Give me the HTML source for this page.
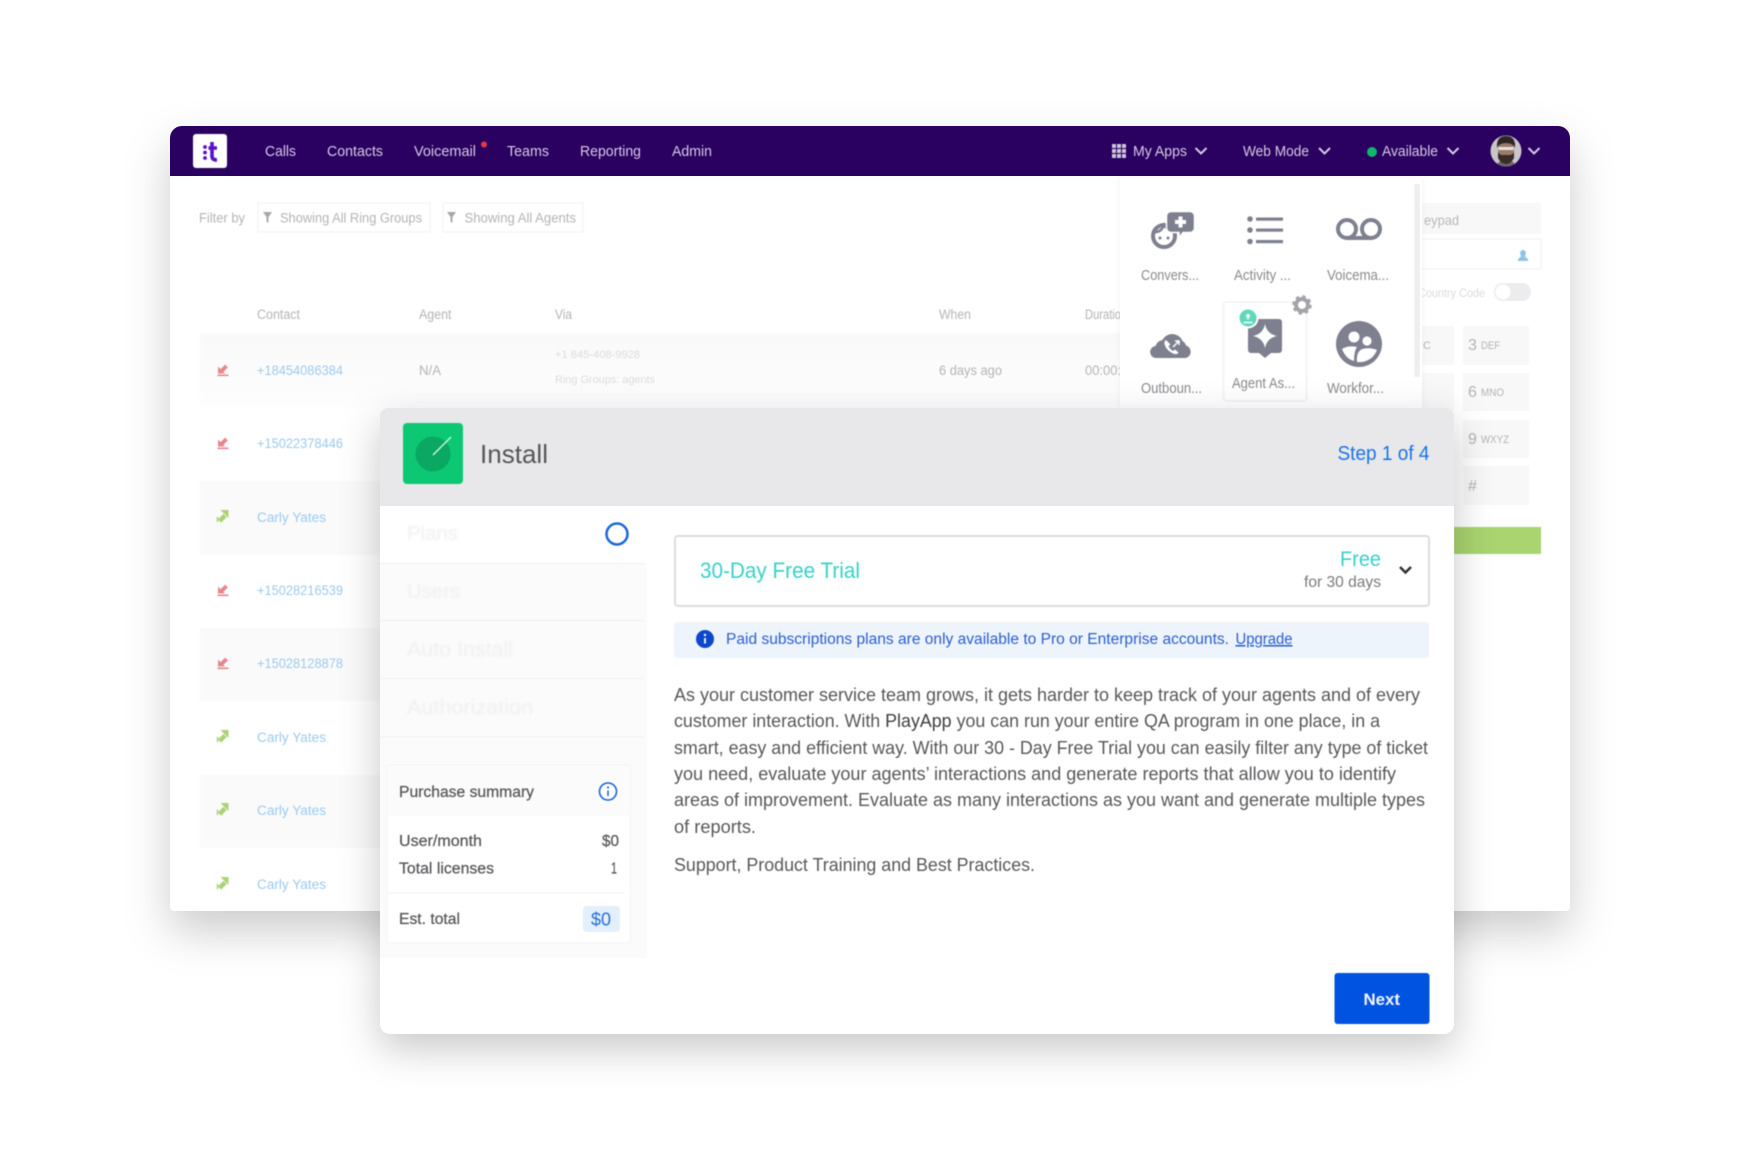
<!DOCTYPE html>
<html lang="en"><head><meta charset="utf-8"><title>Install</title>
<style>
html,body{margin:0;padding:0;background:#fff;width:1740px;height:1160px;overflow:hidden}
svg{display:block;position:absolute;left:0;top:0}
text{font-family:"Liberation Sans",sans-serif;white-space:pre}
.nav text{font-size:15px;fill:#d6cbe6}
.soft{filter:blur(.6px)}
.softer{filter:blur(1.1px)}
.bg text{fill:#b4b4b8;font-size:13.500px}
.lnk text{fill:#9ccaf0;font-size:13.500px}
.lab text{font-size:14.500px;fill:#8a8a90}
.p text{font-size:18px;fill:#58585c}
.s text{font-size:15.500px;fill:#58585c;stroke:#58585c;stroke-width:.25px}
.side text{font-size:20px;fill:#efeff0}
.k text{fill:#b3b3b5;font-size:16px}
.k .sm{font-size:11px}
</style></head><body>
<svg width="1740" height="1160" viewBox="0 0 1740 1160" xmlns="http://www.w3.org/2000/svg">
<defs>
<linearGradient id="rowg" x1="0" y1="0" x2="0" y2="1"><stop offset="0" stop-color="#f9f9f9"/><stop offset="1" stop-color="#fefefe"/></linearGradient>
<g id="rd"><path d="M3.500-4L-1.500 1" stroke-width="4" stroke="currentColor" fill="none"/><path d="M-5-3.500V3.500H2Z" fill="currentColor"/><rect x="-5.500" y="4.500" width="11" height="1.600" fill="currentColor"/></g>
<g id="gr"><path d="M-3.500 5L2-.5" stroke-width="4.500" stroke="currentColor" fill="none"/><path d="M5.500-6V2L-2.500-6Z" fill="currentColor"/><path d="M-5.500 1V6" stroke="currentColor" stroke-width="1.500"/></g>
</defs>
<!-- window -->
<path d="M182 126H1558a12 12 0 0 1 12 12V907a4 4 0 0 1-4 4H174a4 4 0 0 1-4-4V138a12 12 0 0 1 12-12Z" fill="#fff" style="filter:drop-shadow(0 20px 22px rgba(0,0,0,.2))"/>
<path d="M182 126H1558a12 12 0 0 1 12 12V176H170V138a12 12 0 0 1 12-12Z" fill="#2a0060"/>

<g class="soft">
<!-- logo -->
<rect x="193" y="134" width="34" height="34" rx="3" fill="#fff"/>
<circle cx="205" cy="147" r="1.900" fill="#5a12c8"/><circle cx="205" cy="152.500" r="1.900" fill="#5a12c8"/><circle cx="205" cy="158" r="1.900" fill="#5a12c8"/>
<path d="M212 142V156Q212 160 217 160M208.500 148H217" fill="none" stroke="#5a12c8" stroke-width="3.600"/>
<g class="nav">
<text x="265" y="156" textLength="31" lengthAdjust="spacingAndGlyphs">Calls</text>
<text x="327" y="156" textLength="56" lengthAdjust="spacingAndGlyphs">Contacts</text>
<text x="414" y="156" textLength="62" lengthAdjust="spacingAndGlyphs">Voicemail</text>
<text x="507" y="156" textLength="42" lengthAdjust="spacingAndGlyphs">Teams</text>
<text x="580" y="156" textLength="61" lengthAdjust="spacingAndGlyphs">Reporting</text>
<text x="672" y="156" textLength="40" lengthAdjust="spacingAndGlyphs">Admin</text>
<text x="1133" y="156" textLength="54" lengthAdjust="spacingAndGlyphs">My Apps</text>
<text x="1243" y="156" textLength="66" lengthAdjust="spacingAndGlyphs">Web Mode</text>
<text x="1382" y="156" textLength="56" lengthAdjust="spacingAndGlyphs">Available</text>
</g>
<circle cx="484" cy="144.500" r="3" fill="#e8364a"/>
<g fill="#cfc6dc"><rect x="1112" y="144" width="4" height="4"/><rect x="1117" y="144" width="4" height="4"/><rect x="1122" y="144" width="4" height="4"/><rect x="1112" y="149" width="4" height="4"/><rect x="1117" y="149" width="4" height="4"/><rect x="1122" y="149" width="4" height="4"/><rect x="1112" y="154" width="4" height="4"/><rect x="1117" y="154" width="4" height="4"/><rect x="1122" y="154" width="4" height="4"/></g>
<g fill="none" stroke="#d6cbe6" stroke-width="2"><path d="M1195.500 148l5.500 5.500 5.500-5.500"/><path d="M1319 148l5.500 5.500 5.500-5.500"/><path d="M1447.500 148l5.500 5.500 5.500-5.500"/><path d="M1528.500 148l5.500 5.500 5.500-5.500"/></g>
<circle cx="1372" cy="152" r="5" fill="#12b76a"/>
<clipPath id="av"><circle cx="1506" cy="151" r="15.500"/></clipPath>
<g clip-path="url(#av)"><rect x="1490" y="135" width="32" height="32" fill="#c8c6c8"/>
<path d="M1496 170q0-10 10-10t10 10Z" fill="#6a6468"/>
<ellipse cx="1506" cy="150" rx="8" ry="11" fill="#9c7c68"/>
<path d="M1497 148q-1-12 9-12t9 12q-2-5-9-5t-9 5Z" fill="#2d2624"/>
<path d="M1498 152q2 3 4 3h8q2 0 4-3v6q-3 6-8 6t-8-6Z" fill="#3a2c28"/>
<rect x="1498.500" y="147" width="15" height="3" fill="#e6e2e0"/></g>
</g>

<!-- background page -->
<g class="soft">
<rect x="258" y="203" width="172" height="29" fill="#fff" stroke="#f2f2f2"/>
<rect x="443" y="203" width="140" height="29" fill="#fff" stroke="#f2f2f2"/>
<g class="bg">
<text x="199" y="222.500" textLength="46" lengthAdjust="spacingAndGlyphs">Filter by</text>
<text x="280" y="222.500" textLength="142" lengthAdjust="spacingAndGlyphs">Showing All Ring Groups</text>
<text x="464.500" y="222.500" textLength="111.500" lengthAdjust="spacingAndGlyphs">Showing All Agents</text>
<text x="257" y="319" textLength="43" lengthAdjust="spacingAndGlyphs">Contact</text>
<text x="419" y="319" textLength="32.500" lengthAdjust="spacingAndGlyphs">Agent</text>
<text x="555" y="319" textLength="17" lengthAdjust="spacingAndGlyphs">Via</text>
<text x="939" y="319" textLength="32" lengthAdjust="spacingAndGlyphs">When</text>
<text x="1085" y="319" textLength="36" lengthAdjust="spacingAndGlyphs">Duratio</text>
</g>
<path d="M263 212h9l-3.500 5v6l-2-1.500v-4.500Z" fill="#a8a8ac"/><path d="M447 212h9l-3.500 5v6l-2-1.500v-4.500Z" fill="#a8a8ac"/>
<rect x="200" y="333" width="960" height="75" fill="url(#rowg)"/>
<g fill="#fafafa"><rect x="200" y="481" width="190" height="74"/><rect x="200" y="628" width="190" height="73"/><rect x="200" y="775" width="190" height="73"/></g>
<g class="lnk">
<text x="257" y="375" textLength="86" lengthAdjust="spacingAndGlyphs">+18454086384</text>
<text x="257" y="448" textLength="86" lengthAdjust="spacingAndGlyphs">+15022378446</text>
<text x="257" y="522" textLength="69" lengthAdjust="spacingAndGlyphs">Carly Yates</text>
<text x="257" y="595" textLength="86" lengthAdjust="spacingAndGlyphs">+15028216539</text>
<text x="257" y="668" textLength="86" lengthAdjust="spacingAndGlyphs">+15028128878</text>
<text x="257" y="742" textLength="69" lengthAdjust="spacingAndGlyphs">Carly Yates</text>
<text x="257" y="815" textLength="69" lengthAdjust="spacingAndGlyphs">Carly Yates</text>
<text x="257" y="889" textLength="69" lengthAdjust="spacingAndGlyphs">Carly Yates</text>
</g>
<g class="bg">
<text x="419" y="375" textLength="22" lengthAdjust="spacingAndGlyphs">N/A</text>
<text x="939" y="375" textLength="63" lengthAdjust="spacingAndGlyphs">6 days ago</text>
<text x="1085" y="375" textLength="36" lengthAdjust="spacingAndGlyphs">00:00:</text>
</g>
<text x="555" y="358" textLength="85" lengthAdjust="spacingAndGlyphs" style="font-size:11px;fill:#dcdcde">+1 845-408-9928</text>
<text x="555" y="383" textLength="100" lengthAdjust="spacingAndGlyphs" style="font-size:11px;fill:#dcdcde">Ring Groups: agents</text>
<g color="#e8868e"><use href="#rd" x="223" y="370"/><use href="#rd" x="223" y="443"/><use href="#rd" x="223" y="590"/><use href="#rd" x="223" y="663"/></g>
<g color="#aad274"><use href="#gr" x="223" y="516"/><use href="#gr" x="223" y="736"/><use href="#gr" x="223" y="809"/><use href="#gr" x="223" y="883"/></g>

<!-- keypad -->
<rect x="1422" y="203" width="119" height="31" fill="#f8f8f8"/>
<text x="1424" y="225" textLength="35" lengthAdjust="spacingAndGlyphs" style="font-size:14px;fill:#b8b8ba">eypad</text>
<rect x="1410" y="239" width="131" height="30" fill="#fff" stroke="#efefef"/>
<path d="M1523 250a3 3 0 0 1 2.500 4.500l-.5 2 3 2.500v2h-10v-2l3-2.500-.5-2a3 3 0 0 1 2.500-4.500Z" fill="#8fc3e8"/>
<text x="1418" y="297" textLength="67" lengthAdjust="spacingAndGlyphs" style="font-size:11.500px;fill:#dadadc">Country Code</text>
<rect x="1494" y="283" width="37" height="18" rx="9" fill="#ececee"/><circle cx="1503" cy="292" r="7.500" fill="#fff"/>
<g fill="#f8f8f8"><rect x="1422" y="326" width="32" height="39"/><rect x="1422" y="373" width="32" height="38"/><rect x="1463" y="326" width="66" height="39"/><rect x="1463" y="373" width="66" height="38"/><rect x="1463" y="420" width="66" height="38"/><rect x="1463" y="466" width="66" height="39"/></g>
<g class="k">
<text class="sm" x="1423" y="349">C</text>
<text x="1468" y="350">3</text><text class="sm" x="1481" y="349" textLength="19" lengthAdjust="spacingAndGlyphs">DEF</text>
<text x="1468" y="397">6</text><text class="sm" x="1481" y="396" textLength="23" lengthAdjust="spacingAndGlyphs">MNO</text>
<text x="1468" y="444">9</text><text class="sm" x="1481" y="443" textLength="28" lengthAdjust="spacingAndGlyphs">WXYZ</text>
<text x="1468" y="491">#</text>
</g>
<rect x="1454" y="527" width="87" height="27" fill="#a9d46f"/>
</g>

<!-- apps dropdown -->
<rect x="1120" y="178" width="302" height="230" fill="#fff" style="filter:drop-shadow(0 0 3px rgba(0,0,0,.05))"/>
<g class="soft">
<rect x="1414.500" y="184" width="5.500" height="193" fill="#eeeeef"/>
<!-- conversations -->
<circle cx="1164" cy="236" r="11" fill="#fff" stroke="#7e808f" stroke-width="4"/>
<path d="M1153 232q8 1 11-7 4 6 10 7" fill="none" stroke="#7e808f" stroke-width="2.500"/>
<circle cx="1160" cy="238" r="1.500" fill="#7e808f"/><circle cx="1168" cy="238" r="1.500" fill="#7e808f"/>
<path d="M1171 211.500H1190a4.500 4.500 0 0 1 4.500 4.500V228a4.500 4.500 0 0 1-4.500 4.500H1183L1179 238V232.500H1171a4.500 4.500 0 0 1-4.500-4.500V216a4.500 4.500 0 0 1 4.500-4.500Z" fill="#7e808f" stroke="#fff" stroke-width="1.500"/>
<path d="M1180.500 216.500v11M1175 222h11" stroke="#fff" stroke-width="4"/>
<!-- activity -->
<g fill="#7e808f"><circle cx="1250" cy="219" r="2.800"/><circle cx="1250" cy="230" r="2.800"/><circle cx="1250" cy="241.500" r="2.800"/><rect x="1256" y="217.500" width="27" height="3.200"/><rect x="1256" y="228.500" width="27" height="3.200"/><rect x="1256" y="240" width="27" height="3.200"/></g>
<!-- voicemail -->
<g fill="none" stroke="#7e808f" stroke-width="4"><circle cx="1347" cy="229" r="9"/><circle cx="1371" cy="229" r="9"/><path d="M1347 238H1371"/></g>
<!-- cloud -->
<path d="M1157 358a6 6 0 0 1-1.500-12 9 9 0 0 1 7-6 11 11 0 0 1 20 1 8 8 0 0 1 3.500 4.500 6.500 6.500 0 0 1 0 12.500Z" fill="#7e808f"/>
<path d="M1166 340q-2 1-1.500 4 2 7 10 10 3 .5 4-1.500l-3.500-3-2 1.500q-3-1.500-4.500-5l2-1.500Z" fill="#fff"/>
<path d="M1173 347l6-6M1175 341h4v4" fill="none" stroke="#fff" stroke-width="1.500"/>
<!-- agent assist -->
<rect x="1223.500" y="302" width="83" height="99" rx="3" fill="#fff" stroke="#f1f1f3" stroke-width="1.500"/>
<path d="M1251 319H1279a3 3 0 0 1 3 3V350a3 3 0 0 1-3 3H1271L1265 358L1259 353H1251a3 3 0 0 1-3-3V322a3 3 0 0 1 3-3Z" fill="#7e808f"/>
<path d="M1265 324Q1267 334 1277 336Q1267 338 1265 348Q1263 338 1253 336Q1263 334 1265 324Z" fill="#fff"/>
<circle cx="1248" cy="318" r="9.500" fill="#5fd9b9" stroke="#fff" stroke-width="2"/>
<circle cx="1248" cy="316" r="2.200" fill="#e8fbf5"/><path d="M1248 316v3.500M1243.500 322.500h9" stroke="#e8fbf5" stroke-width="1.800"/>
<circle cx="1302" cy="305" r="6" fill="#fff" stroke="#a4a4a8" stroke-width="4"/>
<circle cx="1302" cy="305" r="8.500" fill="none" stroke="#a4a4a8" stroke-width="2.500" stroke-dasharray="3.400 3.270"/>
<!-- workforce -->
<circle cx="1359" cy="344" r="23" fill="#7e808f"/>
<circle cx="1354" cy="337" r="5.500" fill="#fff"/><circle cx="1367" cy="341" r="4.600" fill="#fff"/>
<path d="M1342 349q6-4 15-2-3 4-3 14-8-2-12-12Z" fill="#fff"/><path d="M1357 362q-1-10 5-13 8-2 15 1-3 8-11 11-4 1.500-9 1Z" fill="#fff"/>
<g class="lab">
<text x="1141" y="280" textLength="58" lengthAdjust="spacingAndGlyphs">Convers...</text>
<text x="1234" y="280" textLength="57" lengthAdjust="spacingAndGlyphs">Activity ...</text>
<text x="1327" y="280" textLength="62" lengthAdjust="spacingAndGlyphs">Voicema...</text>
<text x="1141" y="393" textLength="61" lengthAdjust="spacingAndGlyphs">Outboun...</text>
<text x="1232" y="388" textLength="63" lengthAdjust="spacingAndGlyphs">Agent As...</text>
<text x="1327" y="393" textLength="57" lengthAdjust="spacingAndGlyphs">Workfor...</text>
</g>
</g>

<!-- modal -->
<path d="M388 408H1446a8 8 0 0 1 8 8V1024a10 10 0 0 1-10 10H390a10 10 0 0 1-10-10V416a8 8 0 0 1 8-8Z" fill="#fff" style="filter:drop-shadow(0 14px 20px rgba(0,0,0,.22))"/>
<path d="M388 408H1446a8 8 0 0 1 8 8V506H380V416a8 8 0 0 1 8-8Z" fill="#e8e8ea"/>
<rect x="380" y="563" width="267" height="395" fill="#fbfbfb"/>
<g stroke="#f3f3f4" stroke-width="1.500"><path d="M380 563.500H644M380 620.500H644M380 678.500H644M380 737H644"/></g>

<g class="soft">
<rect x="403" y="423" width="60" height="61" rx="4" fill="#0cc873"/>
<circle cx="433" cy="454" r="17.500" fill="#0aa862"/>
<path d="M433 455L451 437" stroke="#c9f4dc" stroke-width="1.500"/>
<text x="480" y="463" textLength="68" lengthAdjust="spacingAndGlyphs" style="font-size:26px;fill:#56565a">Install</text>
<text x="1337.500" y="460" textLength="92" lengthAdjust="spacingAndGlyphs" style="font-size:20.500px;fill:#1a73e8">Step 1 of 4</text>
<circle cx="617" cy="534" r="10.500" fill="#fff" stroke="#1a66d8" stroke-width="2.500"/>

<!-- plan -->
<rect x="675" y="536" width="754" height="70" rx="3" fill="#fff" stroke="#dcdcde" stroke-width="2"/>
<text x="700" y="578" textLength="160" lengthAdjust="spacingAndGlyphs" style="font-size:22px;fill:#35d2c8">30-Day Free Trial</text>
<text x="1340" y="566" textLength="41" lengthAdjust="spacingAndGlyphs" style="font-size:21px;fill:#35d2c8">Free</text>
<text x="1304" y="587" textLength="77" lengthAdjust="spacingAndGlyphs" style="font-size:16px;fill:#7a7a7e">for 30 days</text>
<path d="M1400 567l5.500 5.500 5.500-5.500" fill="none" stroke="#2e2e33" stroke-width="2.400"/>
<!-- info -->
<rect x="674" y="622" width="755" height="36" rx="3" fill="#eef4fc"/>
<circle cx="705" cy="639" r="9" fill="#0d47c9"/>
<path d="M705 638v5.500" stroke="#fff" stroke-width="1.800"/><circle cx="705" cy="635" r="1.200" fill="#fff"/>
<text x="726" y="644" textLength="503" lengthAdjust="spacingAndGlyphs" style="font-size:15.500px;fill:#2a5fcf">Paid subscriptions plans are only available to Pro or Enterprise accounts.</text>
<text x="1235.500" y="644" textLength="57" lengthAdjust="spacingAndGlyphs" style="font-size:15.500px;fill:#2a5fcf;text-decoration:underline">Upgrade</text>
<!-- description -->
<g class="p">
<text x="674" y="701" textLength="746" lengthAdjust="spacingAndGlyphs">As your customer service team grows, it gets harder to keep track of your agents and of every</text>
<text x="674" y="727" textLength="706" lengthAdjust="spacingAndGlyphs">customer interaction. With <tspan style="fill:#3f3f43">PlayApp</tspan> you can run your entire QA program in one place, in a</text>
<text x="674" y="754" textLength="754" lengthAdjust="spacingAndGlyphs">smart, easy and efficient way. With our 30 - Day Free Trial you can easily filter any type of ticket</text>
<text x="674" y="780" textLength="722" lengthAdjust="spacingAndGlyphs">you need, evaluate your agents’ interactions and generate reports that allow you to identify</text>
<text x="674" y="806" textLength="751" lengthAdjust="spacingAndGlyphs">areas of improvement. Evaluate as many interactions as you want and generate multiple types</text>
<text x="674" y="833" textLength="82" lengthAdjust="spacingAndGlyphs">of reports.</text>
<text x="674" y="871" textLength="361" lengthAdjust="spacingAndGlyphs">Support, Product Training and Best Practices.</text>
</g>
<!-- next -->
<rect x="1334.500" y="973" width="95" height="51" rx="3" fill="#0052e0"/>
<text x="1363.500" y="1005" textLength="36.500" lengthAdjust="spacingAndGlyphs" style="font-size:17px;font-weight:bold;fill:#f2f6ff">Next</text>
</g>

<g class="softer side">
<text x="407" y="540" textLength="51" lengthAdjust="spacingAndGlyphs">Plans</text>
<text x="407" y="598" textLength="53" lengthAdjust="spacingAndGlyphs">Users</text>
<text x="407" y="656" textLength="106" lengthAdjust="spacingAndGlyphs">Auto Install</text>
<text x="407" y="714" textLength="126" lengthAdjust="spacingAndGlyphs">Authorization</text>
</g>

<!-- summary -->
<g class="soft">
<rect x="387" y="765" width="243" height="178" fill="#fbfbfb" stroke="#f6f6f6"/>
<rect x="388" y="816" width="241" height="126" fill="#fff"/>
<path d="M388 893H624" stroke="#f6f6f7" stroke-width="1.500"/>
<g class="s">
<text x="399" y="797" textLength="135" lengthAdjust="spacingAndGlyphs">Purchase summary</text>
<text x="399" y="846" textLength="83" lengthAdjust="spacingAndGlyphs">User/month</text>
<text x="602" y="846" textLength="17" lengthAdjust="spacingAndGlyphs">$0</text>
<text x="399" y="873.500" textLength="95" lengthAdjust="spacingAndGlyphs">Total licenses</text>
<text x="611" y="873.500" textLength="6" lengthAdjust="spacingAndGlyphs">1</text>
<text x="399" y="924" textLength="61" lengthAdjust="spacingAndGlyphs">Est. total</text>
</g>
<circle cx="608" cy="791.500" r="8.500" fill="#fff" stroke="#1a66d8" stroke-width="1.600"/>
<path d="M608 790.500v5.500" stroke="#1a66d8" stroke-width="1.600"/><circle cx="608" cy="787.500" r="1.100" fill="#1a66d8"/>
<rect x="583" y="906" width="37" height="26" rx="4" fill="#e3effa"/>
<text x="591" y="925.500" textLength="20" lengthAdjust="spacingAndGlyphs" style="font-size:18px;fill:#2a6fd8">$0</text>
</g>
</svg>
</body></html>
